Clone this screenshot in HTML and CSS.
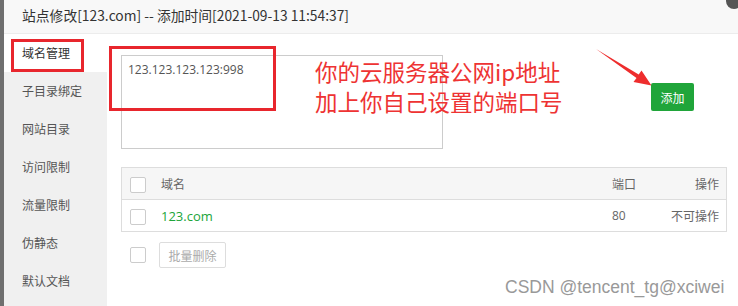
FILE: index.html
```html
<!DOCTYPE html>
<html>
<head>
<meta charset="utf-8">
<link rel="stylesheet" href="styles.css">
</head>
<body>
<div class="modal">
  <div class="titlebar">站点修改[123.com] -- 添加时间[2021-09-13 11:54:37]</div>
  <div class="main">
    <ul class="sidebar">
      <li class="active">域名管理</li>
      <li>子目录绑定</li>
      <li>网站目录</li>
      <li>访问限制</li>
      <li>流量限制</li>
      <li>伪静态</li>
      <li>默认文档</li>
    </ul>
    <div class="content">
      <div class="add-row">
        <div class="textarea">123.123.123.123:998</div>
        <button class="btn-add">添加</button>
      </div>
      <table class="tbl">
        <thead>
          <tr><th class="c-chk"><span class="chk"></span></th><th>域名</th><th class="c-port">端口</th><th class="c-op">操作</th></tr>
        </thead>
        <tbody>
          <tr><td class="c-chk"><span class="chk"></span></td><td class="domain">123.com</td><td class="c-port">80</td><td class="c-op">不可操作</td></tr>
        </tbody>
      </table>
      <div class="batch">
        <span class="chk"></span>
        <button class="btn-batch">批量删除</button>
      </div>
    </div>
  </div>
</div>
<span class="close-dot"></span>
<div class="mark mark-side"></div>
<div class="mark mark-input"></div>
<div class="note">你的云服务器公网ip地址<br>加上你自己设置的端口号</div>
<svg class="arrow" width="70" height="50" viewBox="0 0 70 50">
  <polygon points="6,4 48.7,29.5 51.5,25.5 61.5,40.5 43.5,37 46.5,32.9" fill="#ee2d2d"/>
</svg>
<div class="watermark">CSDN @tencent_tg@xciwei</div>
</body>
</html>
```
FILE: styles.css
```css
html, body {
  margin: 0;
  padding: 0;
}
body {
  position: relative;
  width: 738px;
  height: 306px;
  overflow: hidden;
  background: #6f6f6f;
  font-family: "Noto Sans CJK SC", "Noto Sans", sans-serif;
  font-size: 12px;
  color: #555;
}
.modal {
  margin-left: 4px;
  height: 306px;
  background: #fff;
  display: flex;
  flex-direction: column;
}
.titlebar {
  height: 33px;
  line-height: 31px;
  padding-left: 18px;
  background: #f8f8f8;
  border-bottom: 1px solid #ececec;
  font-size: 13.8px;
  color: #333;
  flex: none;
}
.main {
  display: flex;
  flex: 1;
}
.sidebar {
  list-style: none;
  margin: 0;
  padding: 0;
  width: 103px;
  background: #f0f0f0;
  flex: none;
}
.sidebar li {
  height: 38px;
  line-height: 38px;
  padding-left: 18px;
  color: #555;
  font-size: 12px;
}
.sidebar li.active {
  background: #fff;
  color: #333;
}
.content {
  flex: 1;
  padding: 21px 0 0 14px;
}
.add-row {
  display: flex;
  align-items: flex-start;
}
.textarea {
  width: 308px;
  height: 80px;
  border: 1px solid #ccc;
  padding: 5px 6px 7px;
  font-size: 12px;
  color: #555;
  font-family: "Open Sans", "Noto Sans CJK SC", sans-serif;
  line-height: 18px;
}
.btn-add {
  margin: 28px 0 0 208px;
  width: 43px;
  height: 28px;
  border: none;
  border-radius: 2px;
  background: #20a53a;
  color: #fff;
  font-family: "Noto Sans CJK SC", sans-serif;
  font-size: 12px;
  padding: 0;
}
.tbl {
  margin-top: 18px;
  width: 606px;
  border-collapse: collapse;
  border: 1px solid #ddd;
}
.tbl th, .tbl td {
  height: 31px;
  padding: 0;
  font-weight: normal;
  text-align: left;
  font-size: 12px;
  color: #666;
  border-bottom: 1px solid #ddd;
}
.tbl thead tr {
  background: #f6f6f6;
}
.tbl .c-chk {
  width: 31px;
  padding-left: 8px;
}
.tbl .c-port {
  width: 47px;
}
.tbl .c-op {
  width: 60px;
  text-align: right;
  padding-right: 7px;
}
.tbl td.domain {
  color: #20a53a;
  font-family: "Open Sans", sans-serif;
  font-size: 13px;
}
.tbl td.c-port {
  font-family: "Open Sans", sans-serif;
}
.chk {
  display: inline-block;
  width: 14px;
  height: 14px;
  border: 1px solid #ccc;
  border-radius: 2px;
  background: #fff;
  vertical-align: middle;
}
.batch {
  display: flex;
  align-items: center;
  margin-top: 10px;
  padding-left: 9px;
}
.btn-batch {
  margin-left: 13px;
  width: 67px;
  height: 26px;
  border: 1px solid #ddd;
  border-radius: 2px;
  background: #fff;
  color: #aaa;
  font-family: "Noto Sans CJK SC", sans-serif;
  font-size: 12px;
  padding: 0;
}
.close-dot {
  position: absolute;
  left: 726px;
  top: -7px;
  width: 16px;
  height: 16px;
  border-radius: 50%;
  background: #555;
}
.mark {
  position: absolute;
  border: 3px solid #e8262d;
  box-sizing: border-box;
}
.mark-side {
  left: 11px;
  top: 39px;
  width: 73px;
  height: 33px;
}
.mark-input {
  left: 109px;
  top: 46px;
  width: 167px;
  height: 65px;
}
.note {
  position: absolute;
  left: 315px;
  top: 56px;
  font-size: 22.5px;
  line-height: 30px;
  color: #ee3333;
  font-family: "Noto Sans CJK SC", sans-serif;
  white-space: nowrap;
}
.arrow {
  position: absolute;
  left: 590px;
  top: 45px;
}
.watermark {
  position: absolute;
  left: 505px;
  top: 277px;
  font-family: "Liberation Sans", sans-serif;
  font-size: 17.5px;
  color: #999;
  white-space: nowrap;
}
```
